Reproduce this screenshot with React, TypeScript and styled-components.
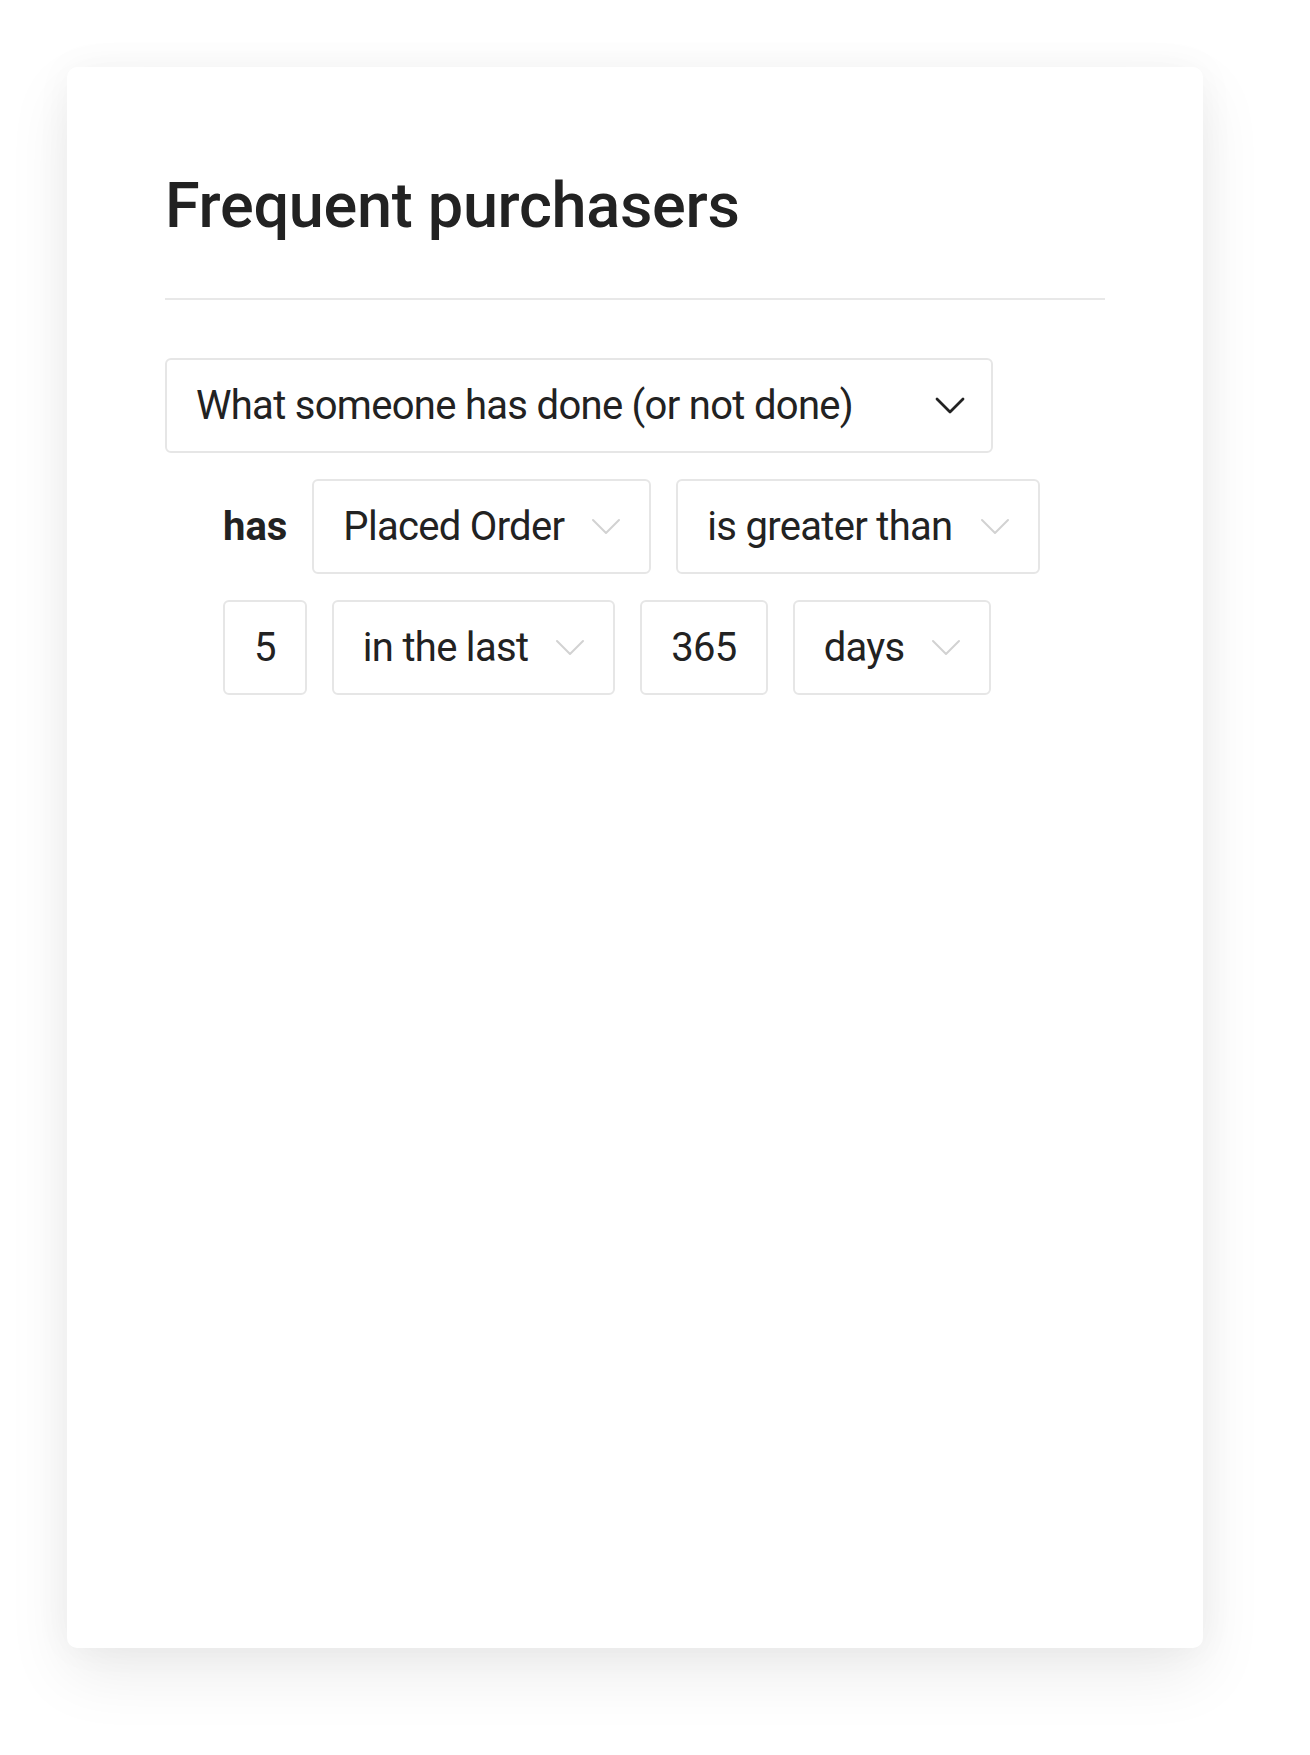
import React from 'react'
import styled, { createGlobalStyle } from 'styled-components'

const GlobalStyle = createGlobalStyle`
  html, body {
    margin: 0;
    padding: 0;
    background: #ffffff;
  }
  body {
    font-family: Roboto, "Liberation Sans", Arial, sans-serif;
    color: #222222;
  }
`

const Page = styled.div`
  padding: 67px;
  box-sizing: border-box;
  width: 1310px;
  min-height: 1755px;
`

const Card = styled.section`
  box-sizing: border-box;
  width: 1136px;
  height: 1581px;
  padding: 107px 98px;
  background: #fff;
  border-radius: 10px;
  box-shadow: 0 26px 64px rgba(0, 0, 0, 0.08), 0 0 38px rgba(0, 0, 0, 0.04);
`

const Title = styled.h1`
  margin: 0;
  font-size: 63px;
  line-height: 1;
  font-weight: 500;
  letter-spacing: -0.3px;
  color: #222;
`

const Divider = styled.hr`
  border: 0;
  height: 2px;
  background: #e8e8e8;
  margin: 61px 0 58px;
`

const Rows = styled.div`
  display: flex;
  flex-direction: column;
  gap: 26px;
`

const Row = styled.div<{ $indent?: boolean }>`
  display: flex;
  align-items: center;
  gap: 25px;
  padding-left: ${p => (p.$indent ? '58px' : '0')};
`

const Box = styled.div<{ $wide?: boolean; $center?: boolean }>`
  box-sizing: border-box;
  display: flex;
  align-items: center;
  justify-content: ${p => (p.$wide ? 'space-between' : p.$center ? 'center' : 'flex-start')};
  gap: 27px;
  height: 95px;
  width: ${p => (p.$wide ? '828px' : 'auto')};
  padding: ${p => (p.$center ? '0 29px' : p.$wide ? '0 26px 0 29px' : '0 28px 0 29px')};
  border: 2px solid #e6e6e6;
  border-radius: 6px;
  font-size: 40px;
  font-weight: 400;
  letter-spacing: -0.7px;
  color: #222;
  white-space: nowrap;

  svg {
    flex-shrink: 0;
  }
`

const Label = styled.span`
  font-size: 40px;
  font-weight: 700;
  color: #222;
`

const Chevron = ({ dark }: { dark?: boolean }) => (
  <svg width="30" height="18" viewBox="0 0 30 18" fill="none">
    <path
      d="M2 2 L15 15 L28 2"
      stroke={dark ? '#222' : '#d2d2d2'}
      strokeWidth={dark ? 2.8 : 2}
      strokeLinecap="round"
      strokeLinejoin="round"
    />
  </svg>
)

const Select = ({ label, wide }: { label: string; wide?: boolean }) => (
  <Box $wide={wide}>
    <span>{label}</span>
    <Chevron dark={wide} />
  </Box>
)

export default function App() {
  return (
    <Page>
      <GlobalStyle />
      <Card>
        <Title>Frequent purchasers</Title>
        <Divider />
        <Rows>
          <Row>
            <Select wide label="What someone has done (or not done)" />
          </Row>
          <Row $indent>
            <Label>has</Label>
            <Select label="Placed Order" />
            <Select label="is greater than" />
          </Row>
          <Row $indent>
            <Box $center>5</Box>
            <Select label="in the last" />
            <Box $center>365</Box>
            <Select label="days" />
          </Row>
        </Rows>
      </Card>
    </Page>
  )
}
